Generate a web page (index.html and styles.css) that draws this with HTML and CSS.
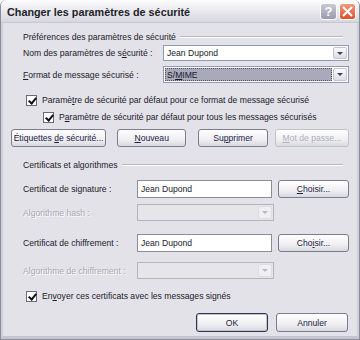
FILE: index.html
```html
<!DOCTYPE html>
<html lang="fr">
<head>
  <meta charset="UTF-8">
  <link rel="stylesheet" href="styles.css">
  <title>Changer les paramètres de sécurité</title>
</head>
<body>
  <div class="window">
    <div class="titlebar">
      <span class="title">Changer les paramètres de sécurité</span>
      <div class="caption_btns">
        <div class="cap_btn help">?</div>
        <div class="cap_btn close">
          <svg width="11" height="11" viewBox="0 0 11 11"><path d="M1.5 1.5 L9.5 9.5 M9.5 1.5 L1.5 9.5" stroke="#fff" stroke-width="2" stroke-linecap="round"/></svg>
        </div>
      </div>
    </div>
    <div class="content">
      <div class="group_head first">
        <span>Préférences des paramètres de sécurité</span>
        <div class="sep"></div>
      </div>

      <div class="field_row name_row">
        <label class="label wide">Nom des paramètres de s<u>é</u>curité :</label>
        <div class="combo big">
          <span class="combo_text"><span>Jean Dupond</span></span>
          <div class="drop"><i></i></div>
        </div>
      </div>

      <div class="field_row format_row">
        <label class="label wide"><u>F</u>ormat de message sécurisé :</label>
        <div class="combo big">
          <span class="combo_text selected"><span>S/<u>M</u>IME</span></span>
          <div class="drop"><i></i></div>
        </div>
      </div>

      <div class="check_row c1">
        <div class="box"></div>
        <span>Paramè<u>t</u>re de sécurité par défaut pour ce format de message sécurisé</span>
      </div>
      <div class="check_row c2">
        <div class="box"></div>
        <span>P<u>a</u>ramètre de sécurité par défaut pour tous les messages sécurisés</span>
      </div>

      <div class="button_row">
        <div class="btn etiq"><span>Étiquettes <u>d</u>e sécurité...</span></div>
        <div class="btn nouveau"><span><u>N</u>ouveau</span></div>
        <div class="btn suppr"><span>Su<u>p</u>primer</span></div>
        <div class="btn disabled motpasse"><span><u>M</u>ot de passe...</span></div>
      </div>

      <div class="group_head second">
        <span>Certificats et algorithmes</span>
        <div class="sep"></div>
      </div>

      <div class="field_row cert_row">
        <label class="label">Certificat de signature :</label>
        <div class="textbox">Jean Dupond</div>
        <div class="btn choisir"><span><u>C</u>hoisir...</span></div>
      </div>
      <div class="field_row algo_row">
        <label class="label disabled_text">Algorithme hash :</label>
        <div class="combo small disabled_combo">
          <span class="combo_text"></span>
          <div class="drop"><i></i></div>
        </div>
      </div>
      <div class="field_row cert_row second_cert">
        <label class="label">Certificat de chiffrement :</label>
        <div class="textbox">Jean Dupond</div>
        <div class="btn choisir"><span>Cho<u>i</u>sir...</span></div>
      </div>
      <div class="field_row algo_row second_algo">
        <label class="label disabled_text">Al<u>g</u>orithme de chiffrement :</label>
        <div class="combo small disabled_combo">
          <span class="combo_text"></span>
          <div class="drop"><i></i></div>
        </div>
      </div>

      <div class="check_row c3">
        <div class="box"></div>
        <span>En<u>v</u>oyer ces certificats avec les messages signés</span>
      </div>

      <div class="footer">
        <div class="btn default"><span>OK</span></div>
        <div class="btn"><span>Annuler</span></div>
      </div>
    </div>
  </div>
</body>
</html>
```

FILE: styles.css
```css
* {
  box-sizing: border-box;
}

body {
  margin: 0;
  width: 360px;
  height: 340px;
  overflow: hidden;
  background: #fff;
  font-family: "Liberation Sans", sans-serif;
  font-size: 8.6px;
  color: #1a1a2a;
  white-space: nowrap;
}

u {
  text-decoration: underline;
  text-underline-offset: 1px;
}

.window {
  display: flex;
  flex-direction: column;
  width: 360px;
  height: 340px;
  background: #e3e2e8;
  border: 1px solid #8a8a9c;
  border-top: none;
  border-radius: 6px 6px 0 0;
  overflow: hidden;
}

.titlebar {
  display: flex;
  align-items: center;
  justify-content: space-between;
  height: 23px;
  padding: 1px 3px 0 6px;
  background: linear-gradient(#fdfdfe 0%, #ebebf0 45%, #d6d6de 100%);
  border-bottom: 1px solid #c8c8d2;
}

.title {
  font-weight: bold;
  font-size: 10.8px;
  color: #1e1e28;
}

.caption_btns {
  display: flex;
  gap: 2px;
}

.cap_btn {
  display: flex;
  align-items: center;
  justify-content: center;
  width: 17px;
  height: 17px;
  border-radius: 3px;
  border: 1px solid #fff;
}

.help {
  background: linear-gradient(#c9c9d6, #9a9aae);
  color: #fff;
  font-weight: bold;
  font-size: 13px;
}

.close {
  background: linear-gradient(#f29a7e, #d9512c);
}

.content {
  flex: 1;
  display: flex;
  flex-direction: column;
  padding: 0 8px 0 8px;
  border-left: 2px solid #d0d0d8;
  border-right: 2px solid #d0d0d8;
  border-bottom: 3px solid #c4c4cc;
}

.group_head {
  display: flex;
  align-items: center;
  gap: 4px;
  height: 14px;
  padding-left: 12px;
}

.group_head.first {
  margin-top: 7px;
}

.group_head.second {
  margin-top: 11px;
}

.sep {
  flex: 1;
  height: 2px;
  border-top: 1px solid #b8b8c4;
  border-bottom: 1px solid #fff;
  margin-right: 6px;
}

.field_row {
  display: flex;
  align-items: center;
}

.label {
  width: 126px;
  padding-left: 12px;
  flex-shrink: 0;
}

.label.wide {
  width: 152px;
}

.name_row {
  margin-top: 1px;
  height: 16px;
}

.format_row {
  margin-top: 5px;
  height: 17px;
}

.combo {
  display: flex;
  align-items: stretch;
  height: 100%;
  background: #fff;
  border: 1px solid #8c9cb4;
  padding: 1px;
}

.combo.big {
  width: 189px;
}

.combo.small {
  width: 137px;
  height: 17px;
}

.combo_text {
  flex: 1;
  display: flex;
  align-items: center;
  padding-left: 2px;
}

.combo_text.selected {
  background: #a9a9bb;
  outline: 1px dotted #555;
  outline-offset: -1px;
}

.drop {
  display: flex;
  align-items: center;
  justify-content: center;
  width: 14px;
  margin-left: 1px;
  background: linear-gradient(#fbfbfd, #dcdce6);
  border: 1px solid #c4c4d2;
  border-radius: 2px;
}

.drop i {
  width: 0;
  height: 0;
  border-left: 3px solid transparent;
  border-right: 3px solid transparent;
  border-top: 3px solid #3c3c6a;
}

.disabled_combo {
  background: #e6e5ea;
  border-color: #b4b4bc;
}

.disabled_combo .drop {
  background: #f0f0f3;
  border-color: #dcdce2;
}

.disabled_combo .drop i {
  border-top-color: #b8b8c4;
}

.disabled_text {
  color: #a8a8b0;
  text-shadow: 1px 1px 0 #fff;
}

.check_row {
  display: flex;
  align-items: center;
  gap: 5px;
  height: 14px;
}

.check_row.c1 {
  margin-top: 10px;
  padding-left: 15px;
}

.check_row.c2 {
  margin-top: 3px;
  padding-left: 32px;
}

.check_row.c3 {
  margin-top: 10px;
  padding-left: 15px;
}

.box {
  position: relative;
  width: 11px;
  height: 11px;
  background: #fff;
  border: 1px solid #6a6a7c;
  flex-shrink: 0;
}

.box::after {
  content: "";
  position: absolute;
  left: 3px;
  top: 0;
  width: 3px;
  height: 6px;
  border-right: 2px solid #111;
  border-bottom: 2px solid #111;
  transform: rotate(40deg);
}

.btn {
  display: flex;
  align-items: center;
  justify-content: center;
  height: 18px;
  border: 1px solid #7c7c90;
  border-radius: 3px;
  background: linear-gradient(#ffffff 0%, #efeff3 60%, #d8d8e0 100%);
  color: #1a1a40;
}

.btn.disabled {
  color: #b0b0b8;
  border-color: #c2c2cc;
}

.button_row {
  display: flex;
  align-items: center;
  margin-top: 5px;
  height: 18px;
}

.etiq {
  width: 96px;
}

.nouveau {
  width: 70px;
  margin-left: 11px;
}

.suppr {
  width: 70px;
  margin-left: 12px;
}

.motpasse {
  width: 75px;
  margin-left: 7px;
}

.cert_row {
  margin-top: 8px;
  height: 18px;
}

.second_cert {
  margin-top: 13px;
}

.algo_row {
  margin-top: 6px;
  height: 17px;
}

.second_algo {
  margin-top: 10px;
}

.textbox {
  display: flex;
  align-items: center;
  width: 137px;
  height: 18px;
  padding-left: 3px;
  background: #fff;
  border: 1px solid #8c8c9c;
}

.choisir {
  width: 72px;
  margin-left: 6px;
}

.footer {
  display: flex;
  justify-content: flex-end;
  gap: 8px;
  margin-top: 10px;
  margin-right: 1px;
}

.footer .btn {
  width: 72px;
  height: 19px;
}

.btn.default {
  border: 1px solid #33334a;
  box-shadow: inset 0 0 0 1px #c4c4d8;
}
```
